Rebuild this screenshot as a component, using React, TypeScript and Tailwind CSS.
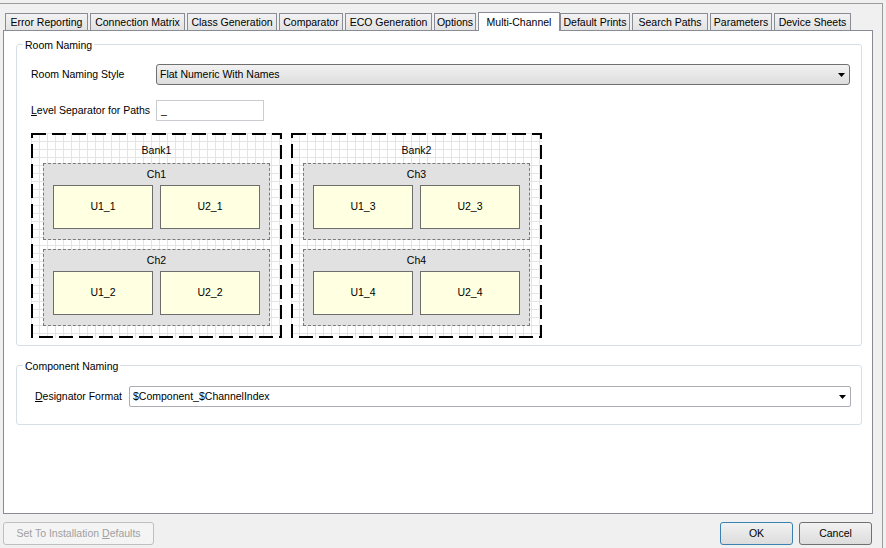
const tabs = [
  { label: "Error Reporting", w: "w-[83px]", ml: "ml-0" },
  { label: "Connection Matrix", w: "w-[95px]", ml: "ml-[2px]" },
  { label: "Class Generation", w: "w-[90px]", ml: "ml-[2px]" },
  { label: "Comparator", w: "w-[64px]", ml: "ml-[2px]" },
  { label: "ECO Generation", w: "w-[87px]", ml: "ml-[2px]" },
  { label: "Options", w: "w-[42px]", ml: "ml-[2px]" },
  { label: "Multi-Channel", w: "w-[82px]", ml: "ml-[2px]", active: true },
  { label: "Default Prints", w: "w-[70px]", ml: "ml-0" },
  { label: "Search Paths", w: "w-[76px]", ml: "ml-[2px]" },
  { label: "Parameters", w: "w-[62px]", ml: "ml-[2px]" },
  { label: "Device Sheets", w: "w-[77px]", ml: "ml-[2px]" },
];

function Arrow() {
  return (
    <svg width="7" height="4" viewBox="0 0 7 4" className="block">
      <path d="M0 0H7L3.5 4Z" fill="#000" />
    </svg>
  );
}

function Tab({ t }: { t: (typeof tabs)[number] }) {
  if (t.active) {
    return (
      <div
        className={`${t.w} ${t.ml} relative z-10 -mb-px h-[19px] pt-px border border-b-0 border-[#898c95] bg-white flex items-center justify-center`}
      >
        {t.label}
      </div>
    );
  }
  return (
    <div
      className={`${t.w} ${t.ml} h-[17px] pt-px border border-b-0 border-[#898c95] bg-gradient-to-b from-[#f2f2f2] to-[#e3e3e3] flex items-center justify-center whitespace-nowrap`}
    >
      {t.label}
    </div>
  );
}

function Chan({ name, a, b, mt }: { name: string; a: string; b: string; mt?: string }) {
  return (
    <div className={`${mt ?? ""} h-[77px] border border-dashed border-[#7a7a7a] bg-[#e1e1e1] px-[9px]`}>
      <div className="h-[21px] leading-[21px] text-center">{name}</div>
      <div className="flex gap-[7px]">
        {[a, b].map((u) => (
          <div
            key={u}
            className="flex-1 h-[44px] border border-[#6d6d6d] bg-[#ffffe1] flex items-center justify-center"
          >
            {u}
          </div>
        ))}
      </div>
    </div>
  );
}

function Bank({ name, chans }: { name: string; chans: [string, string, string][] }) {
  return (
    <div className="relative w-[251px] h-[205px] px-[12px] pt-[4px] bg-white bg-[linear-gradient(to_right,#e4e4e4_1px,transparent_1px),linear-gradient(to_bottom,#e4e4e4_1px,transparent_1px)] bg-[size:8px_8px]">
      {/* dashed frame */}
      <svg className="absolute inset-0 pointer-events-none" width="251" height="205">
        <rect x="1" y="1" width="249" height="203" fill="none" stroke="#000" strokeWidth="2" strokeDasharray="14 6" />
      </svg>
      <div className="h-[26px] leading-[26px] text-center">{name}</div>
      <Chan name={chans[0][0]} a={chans[0][1]} b={chans[0][2]} />
      <Chan name={chans[1][0]} a={chans[1][1]} b={chans[1][2]} mt="mt-[9px]" />
    </div>
  );
}

export default function App() {
  return (
    <div className="w-[886px] h-[548px] bg-[#f0f0f0] overflow-hidden font-['Liberation_Sans',Arial,sans-serif] text-[10.5px] text-black">
      <div className="mt-[3px] w-[883px] h-[545px] border-t border-r border-[#9c9c9c]">
        {/* tab strip */}
        <div className="h-[26px] pl-[5px] flex items-end">
          {tabs.map((t) => (
            <Tab key={t.label} t={t} />
          ))}
        </div>

        {/* tab page */}
        <div className="ml-[3px] w-[870px] h-[484px] border border-[#898c95] bg-white pt-[13px] pl-[12px]">
          {/* Room Naming */}
          <div className="relative w-[846px] h-[302px] border border-[#d5dfe5] rounded-[3px] pt-[19px] pl-[14px]">
            <span className="absolute left-[6px] top-[-7px] bg-white px-[2px] leading-[14px]">Room Naming</span>
            <div className="flex items-center">
              <div className="w-[125px]">Room Naming Style</div>
              <div className="w-[694px] h-[21px] border border-[#707070] rounded-[3px] bg-gradient-to-b from-[#f2f2f2] to-[#dddddd] flex items-center pl-[3px] pr-[4px]">
                <span className="flex-1">Flat Numeric With Names</span>
                <Arrow />
              </div>
            </div>
            <div className="flex items-center mt-[15px]">
              <div className="w-[125px]">
                <u className="underline-offset-1">L</u>evel Separator for Paths
              </div>
              <div className="w-[108px] h-[21px] border border-[#c9cdd2] flex items-center pl-[4px]">_</div>
            </div>
            <div className="flex gap-[9px] mt-[12px]">
              <Bank
                name="Bank1"
                chans={[
                  ["Ch1", "U1_1", "U2_1"],
                  ["Ch2", "U1_2", "U2_2"],
                ]}
              />
              <Bank
                name="Bank2"
                chans={[
                  ["Ch3", "U1_3", "U2_3"],
                  ["Ch4", "U1_4", "U2_4"],
                ]}
              />
            </div>
          </div>

          {/* Component Naming */}
          <div className="relative mt-[19px] w-[846px] h-[60px] border border-[#d5dfe5] rounded-[3px] pt-[20px] pl-[18px]">
            <span className="absolute left-[6px] top-[-7px] bg-white px-[2px] leading-[14px]">Component Naming</span>
            <div className="flex items-center">
              <div className="w-[94px]">
                <u className="underline-offset-1">D</u>esignator Format
              </div>
              <div className="w-[722px] h-[21px] border border-[#abadb3] rounded-[2px] bg-white flex items-center pl-[3px] pr-[4px]">
                <span className="flex-1">$Component_$ChannelIndex</span>
                <Arrow />
              </div>
            </div>
          </div>
        </div>

        {/* buttons */}
        <div className="flex items-center mt-[8px] pl-[3px]">
          <button className="w-[151px] h-[23px] border border-[#bfbfbf] rounded-[3px] bg-[#f4f4f4] text-[#a0a0a0]">
            Set To Installation <u className="underline-offset-1">D</u>efaults
          </button>
          <button className="ml-auto w-[73px] h-[23px] border border-[#3c7fb1] rounded-[3px] bg-gradient-to-b from-[#f2f2f2] to-[#dcdcdc]">
            OK
          </button>
          <button className="ml-[6px] mr-[10px] w-[73px] h-[23px] border border-[#707070] rounded-[3px] bg-gradient-to-b from-[#f2f2f2] to-[#dcdcdc]">
            Cancel
          </button>
        </div>
      </div>
    </div>
  );
}
